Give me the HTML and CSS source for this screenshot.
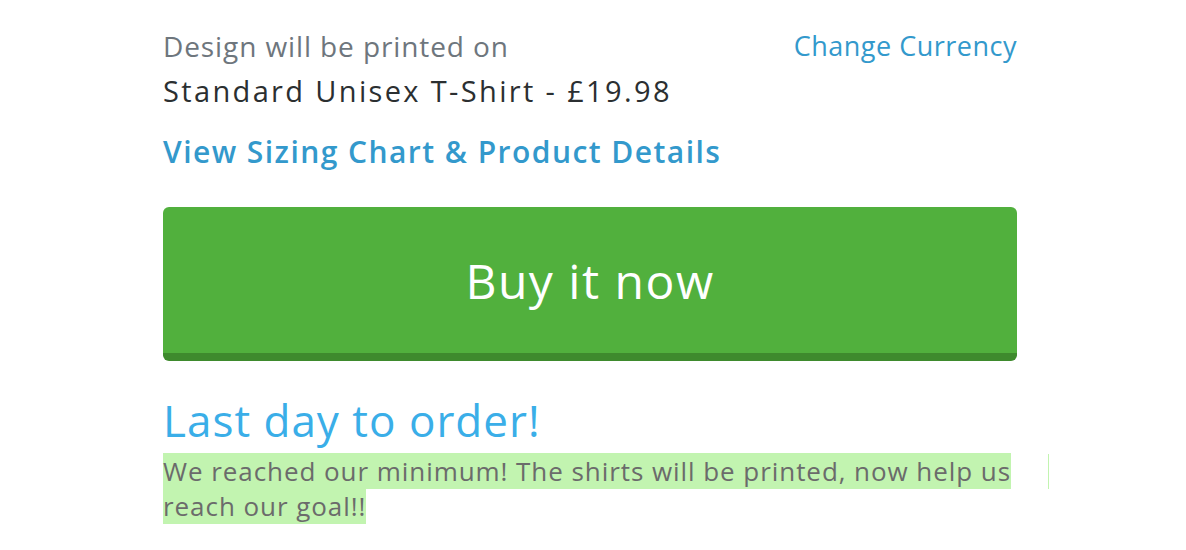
FILE: index.html
```html
<!DOCTYPE html>
<html>
<head>
<meta charset="utf-8">
<link rel="stylesheet" href="styles.css">
</head>
<body>
<div class="wrap">
  <div class="top">
    <div class="product">
      <div class="label">Design will be printed on</div>
      <div class="name">Standard Unisex T-Shirt - £19.98</div>
    </div>
    <a class="currency" href="#">Change Currency</a>
  </div>
  <a class="details" href="#">View Sizing Chart &amp; Product Details</a>
  <button class="buy">Buy it now</button>
  <h2 class="last">Last day to order!</h2>
  <p class="msg"><mark>We reached our minimum! The shirts will be printed, now help us reach our goal!!</mark><span class="tick"></span></p>
</div>
</body>
</html>
```
FILE: styles.css
```css
html, body { margin: 0; padding: 0; background: #fff; }
body { font-family: "Open Sans", "Noto Sans", sans-serif; }
.wrap { width: 854px; margin-left: 163px; padding-top: 28px; display: flex; flex-direction: column; align-items: flex-start; }
.top { display: flex; justify-content: space-between; align-items: flex-start; width: 100%; }
.label { font-size: 28px; color: #6e767d; line-height: 36px; letter-spacing: 0.9px; }
.name { font-size: 29px; color: #2b2f31; line-height: 40px; letter-spacing: 2.35px; font-weight: 510; margin-top: 7px; }
.currency { font-size: 27px; color: #3399cc; text-decoration: none; line-height: 36px; letter-spacing: 0.5px; }
.details { font-size: 30px; color: #3399cc; text-decoration: none; font-weight: 560; letter-spacing: 1.45px; margin-top: 20px; line-height: 42px; }
.buy { width: 100%; height: 154px; margin-top: 34px; background: #51b03d; border: none; border-bottom: 8px solid #3e8a2d; border-radius: 6px; color: #fff; font-family: inherit; font-size: 48px; letter-spacing: 1.5px; padding: 0; }
.last { font-size: 44px; font-weight: 400; color: #3aaee8; letter-spacing: 1px; margin: 31px 0 0; line-height: 56px; }
.msg { position: relative; width: 886px; margin: 6px 0 0; font-size: 26px; line-height: 35px; color: #6b6b6b; letter-spacing: 0.94px; }
.msg mark { background: #c2f4b0; color: #6b6b6b; }
.tick { position: absolute; right: 0; top: 0; width: 1px; height: 35px; background: #c2f4b0; }
```
